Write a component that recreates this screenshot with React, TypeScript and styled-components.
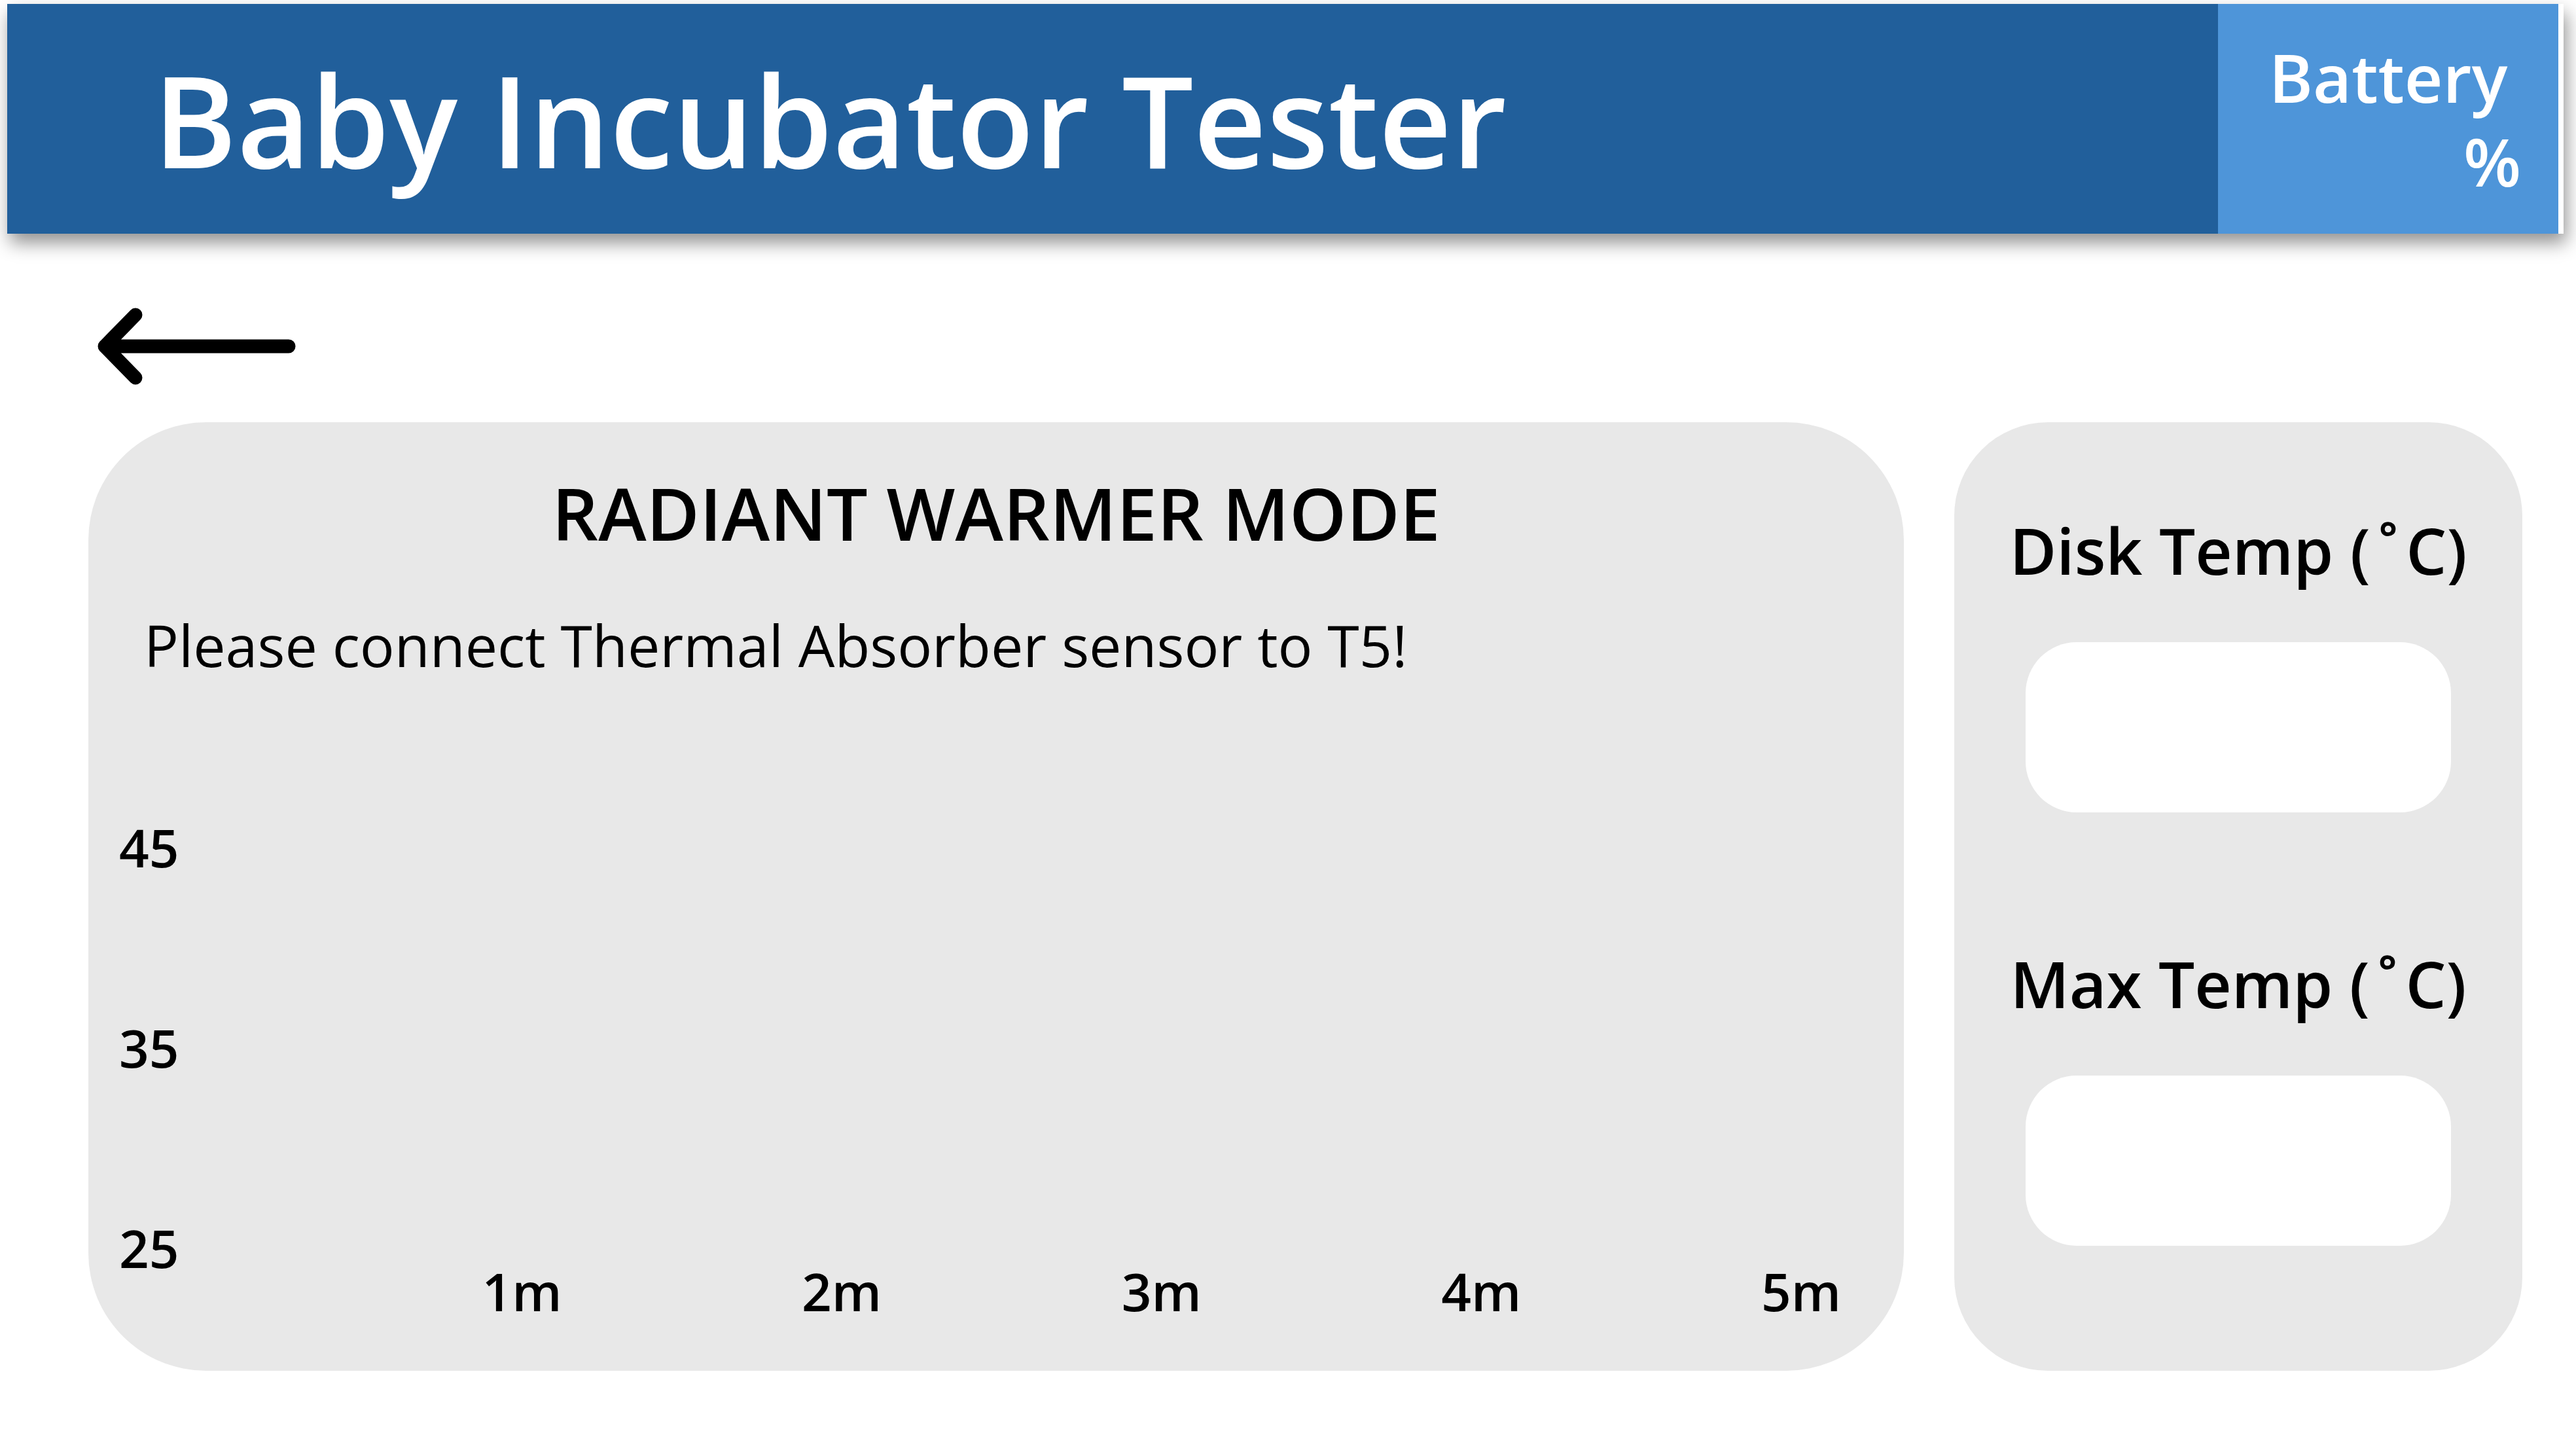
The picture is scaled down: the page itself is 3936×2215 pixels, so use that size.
import React from "react";
import styled, { createGlobalStyle } from "styled-components";

const GlobalStyle = createGlobalStyle`
  *, *::before, *::after { box-sizing: border-box; }
  body {
    margin: 0;
    background: #ffffff;
    color: #000000;
    font-family: "Open Sans", "Noto Sans", sans-serif;
  }
  h1, h2, p, ol { margin: 0; padding: 0; }
  ol { list-style: none; }
`;

const Page = styled.div`
  padding: 6px 0 121px;
`;

const Header = styled.header`
  display: flex;
  min-height: 351px;
  margin: 0 19px 0 11px;
  border-right: 8px solid #ffffff;
  background: #215f9b;
  color: #ffffff;
  box-shadow: 4px 14px 26px rgba(0, 0, 0, 0.43);
`;

const Title = styled.h1`
  flex: 1;
  align-self: center;
  padding-left: 223px;
  font-size: 194px;
  font-weight: 600;
  line-height: 260px;
`;

const Battery = styled.div`
  display: flex;
  flex-direction: column;
  justify-content: center;
  width: 520px;
  background: #4e95d9;
  font-size: 102px;
  font-weight: 600;
  line-height: 128px;
`;

const BatteryLabel = styled.span`
  text-align: center;
`;

const BatteryLevel = styled.span`
  padding-right: 57px;
  text-align: right;
`;

const Nav = styled.nav`
  display: flex;
  padding: 113px 149px 57px;
`;

const BackButton = styled.button`
  display: block;
  padding: 0;
  border: 0;
  background: none;
  color: inherit;
  cursor: pointer;

  svg { display: block; }
`;

const Main = styled.main`
  display: grid;
  grid-template-columns: minmax(0, 1fr) 868px;
  gap: 77px;
  padding: 0 82px 0 135px;
`;

const Panel = styled.section<{ $radius: number }>`
  display: flex;
  flex-direction: column;
  border-radius: ${(p) => p.$radius}px;
  background: #e8e8e8;
`;

const ModePanel = styled(Panel)`
  padding: 68px 96px 72px 47px;
`;

const ReadingsPanel = styled(Panel)`
  align-items: center;
  gap: 201px;
  padding: 135px 0;
`;

const ModeTitle = styled.h2`
  margin-right: -49px;
  font-size: 111px;
  font-weight: 600;
  line-height: 140px;
  text-align: center;
`;

const Instruction = styled.p`
  padding: 72px 0 0 38px;
  font-size: 88px;
  line-height: 120px;
`;

const Chart = styled.div`
  display: flex;
  align-items: flex-end;
  margin-top: 199px;
  font-size: 80px;
  font-weight: 600;
  line-height: 100px;
`;

const TempAxis = styled.ol`
  display: flex;
  flex-direction: column;
  gap: 206px;
  padding-bottom: 66px;
`;

const TimeAxis = styled.ol`
  display: flex;
  flex: 1;
  justify-content: space-between;
  padding-left: 463px;
`;

const Reading = styled.div`
  display: flex;
  flex-direction: column;
  align-items: center;
  gap: 81px;
`;

const ReadingLabel = styled.label`
  font-size: 98px;
  font-weight: 600;
  line-height: 120px;
  white-space: nowrap;
`;

const Degree = styled.span`
  padding: 0 12px;
`;

const ReadingValue = styled.input`
  width: 650px;
  height: 260px;
  padding: 0 40px;
  border: 0;
  border-radius: 78px;
  outline: none;
  background: #ffffff;
  color: inherit;
  font: inherit;
  font-size: 98px;
  text-align: center;
`;

const temperatures = [45, 35, 25];
const minutes = [1, 2, 3, 4, 5];
const readings = [
  { id: "disk-temp", label: "Disk Temp" },
  { id: "max-temp", label: "Max Temp" },
];

function BackArrow() {
  return (
    <svg width="303" height="118" viewBox="0 0 303 118" fill="none" stroke="currentColor" strokeWidth="21" strokeLinecap="round" strokeLinejoin="round" aria-hidden="true">
      <path d="M292 59H11M58 11L11 59L58 107" />
    </svg>
  );
}

export default function App() {
  return (
    <>
      <GlobalStyle />
      <Page>
        <Header>
          <Title>Baby Incubator Tester</Title>
          <Battery>
            <BatteryLabel>Battery</BatteryLabel>
            <BatteryLevel>%</BatteryLevel>
          </Battery>
        </Header>
        <Nav>
          <BackButton type="button" aria-label="Back">
            <BackArrow />
          </BackButton>
        </Nav>
        <Main>
          <ModePanel $radius={180}>
            <ModeTitle>RADIANT WARMER MODE</ModeTitle>
            <Instruction>Please connect Thermal Absorber sensor to T5!</Instruction>
            <Chart>
              <TempAxis>
                {temperatures.map((t) => (
                  <li key={t}>{t}</li>
                ))}
              </TempAxis>
              <TimeAxis>
                {minutes.map((m) => (
                  <li key={m}>{m}m</li>
                ))}
              </TimeAxis>
            </Chart>
          </ModePanel>
          <ReadingsPanel $radius={143}>
            {readings.map((r) => (
              <Reading key={r.id}>
                <ReadingLabel htmlFor={r.id}>
                  {r.label} (<Degree>{"\u02DA"}</Degree>C)
                </ReadingLabel>
                <ReadingValue id={r.id} type="text" readOnly />
              </Reading>
            ))}
          </ReadingsPanel>
        </Main>
      </Page>
    </>
  );
}
